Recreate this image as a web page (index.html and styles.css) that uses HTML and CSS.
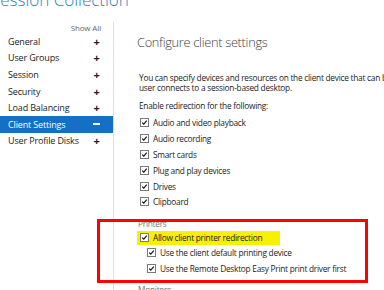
FILE: index.html
```html
<!DOCTYPE html>
<html lang="en">
<head>
  <meta charset="UTF-8">
  <title>Session Collection Properties</title>
  <link rel="stylesheet" href="styles.css">
</head>
<body>

  <h1 class="page-title">Session Collection</h1>

  <div class="layout">

    <!-- left navigation -->
    <div class="sidebar">
      <div class="show-all">Show All</div>
      <div class="nav-item"><span>General</span><span class="sign">+</span></div>
      <div class="nav-item"><span>User Groups</span><span class="sign">+</span></div>
      <div class="nav-item"><span>Session</span><span class="sign">+</span></div>
      <div class="nav-item"><span>Security</span><span class="sign">+</span></div>
      <div class="nav-item"><span>Load Balancing</span><span class="sign">+</span></div>
      <div class="nav-item active"><span>Client Settings</span><span class="sign minus"></span></div>
      <div class="nav-item"><span>User Profile Disks</span><span class="sign">+</span></div>
    </div>

    <!-- settings page -->
    <div class="content">
      <h2>Configure client settings</h2>
      <p class="intro">You can specify devices and resources on the client device that can be redirected when a<br>user connects to a session-based desktop.</p>

      <div class="label">Enable redirection for the following:</div>
      <div class="check"><span class="box"><svg viewBox="0 0 9 9"><path d="M1.6 4.6 L3.6 6.6 L7.4 2.2"/></svg></span>Audio and video playback</div>
      <div class="check"><span class="box"><svg viewBox="0 0 9 9"><path d="M1.6 4.6 L3.6 6.6 L7.4 2.2"/></svg></span>Audio recording</div>
      <div class="check"><span class="box"><svg viewBox="0 0 9 9"><path d="M1.6 4.6 L3.6 6.6 L7.4 2.2"/></svg></span>Smart cards</div>
      <div class="check"><span class="box"><svg viewBox="0 0 9 9"><path d="M1.6 4.6 L3.6 6.6 L7.4 2.2"/></svg></span>Plug and play devices</div>
      <div class="check"><span class="box"><svg viewBox="0 0 9 9"><path d="M1.6 4.6 L3.6 6.6 L7.4 2.2"/></svg></span>Drives</div>
      <div class="check"><span class="box"><svg viewBox="0 0 9 9"><path d="M1.6 4.6 L3.6 6.6 L7.4 2.2"/></svg></span>Clipboard</div>

      <div class="section">Printers</div>
      <div class="check"><span class="marked"><span class="box"><svg viewBox="0 0 9 9"><path d="M1.6 4.6 L3.6 6.6 L7.4 2.2"/></svg></span>Allow client printer redirection</span></div>
      <div class="check sub"><span class="box"><svg viewBox="0 0 9 9"><path d="M1.6 4.6 L3.6 6.6 L7.4 2.2"/></svg></span>Use the client default printing device</div>
      <div class="check sub"><span class="box"><svg viewBox="0 0 9 9"><path d="M1.6 4.6 L3.6 6.6 L7.4 2.2"/></svg></span>Use the Remote Desktop Easy Print print driver first</div>

      <div class="section monitors">Monitors</div>
    </div>

  </div>

  <!-- red annotation frame -->
  <div class="annotation"></div>

</body>
</html>
```

FILE: styles.css
```css
body {
  margin: 0;
  background: #fff;
  font-family: 'Open Sans', 'Noto Sans', sans-serif;
  color: #222;
  overflow: hidden;
  height: 290px;
  position: relative;
}

.page-title {
  margin: -11px 0 0 -9px;
  font-size: 17px;
  font-weight: 300;
  line-height: 22px;
  color: #2b7fbf;
  white-space: nowrap;
}

.layout {
  display: flex;
  margin-top: 11px;
  height: 268px;
}

.sidebar {
  width: 113px;
  flex: none;
  border-right: 1px solid #dedede;
  font-size: 9px;
  letter-spacing: -0.15px;
}

.show-all {
  text-align: right;
  padding-right: 12px;
  font-size: 8px;
  color: #666;
  line-height: 10px;
  margin-top: 1px;
}

.nav-item {
  display: flex;
  justify-content: space-between;
  align-items: center;
  height: 16.6px;
  padding: 0 13px 0 8px;
  color: #222;
}

.nav-item .sign {
  font-weight: bold;
  font-size: 11px;
  width: 7px;
  text-align: center;
}

.nav-item.active {
  background: #1470c4;
  color: #fff;
}

.sign.minus {
  height: 2px;
  background: #fff;
}

.content {
  padding-left: 23px;
  font-size: 8.3px;
  letter-spacing: -0.25px;
  white-space: nowrap;
}

.content h2 {
  margin: 11px 0 0;
  font-size: 12.8px;
  font-weight: 300;
  letter-spacing: -0.3px;
  line-height: 18px;
  color: #444;
}

.intro {
  margin: 22px 0 0 2px;
  line-height: 10px;
  color: #222;
}

.label {
  margin: 8px 0 4px 2px;
  line-height: 10px;
}

.check {
  display: flex;
  align-items: center;
  height: 15.8px;
  padding-left: 3px;
}

.box {
  width: 9px;
  height: 9px;
  box-sizing: border-box;
  border: 1px solid #7a7a7a;
  background: #fff;
  margin-right: 4px;
  flex: none;
  display: flex;
}

.box svg {
  width: 7px;
  height: 7px;
}

.box path {
  fill: none;
  stroke: #111;
  stroke-width: 1.5;
}

.section {
  margin: 9px 0 0 1px;
  line-height: 10px;
  color: #777;
}

.monitors {
  margin-top: 9px;
}

.marked {
  display: flex;
  align-items: center;
  background: #f7f000;
  height: 14px;
  margin: 2px 0 0 -3px;
  padding: 0 18px 0 3px;
}

.check.sub {
  padding-left: 10px;
}

.annotation {
  position: absolute;
  left: 97px;
  top: 219px;
  width: 271px;
  height: 64px;
  box-sizing: border-box;
  border: 3.5px solid #ff0000;
}
```
